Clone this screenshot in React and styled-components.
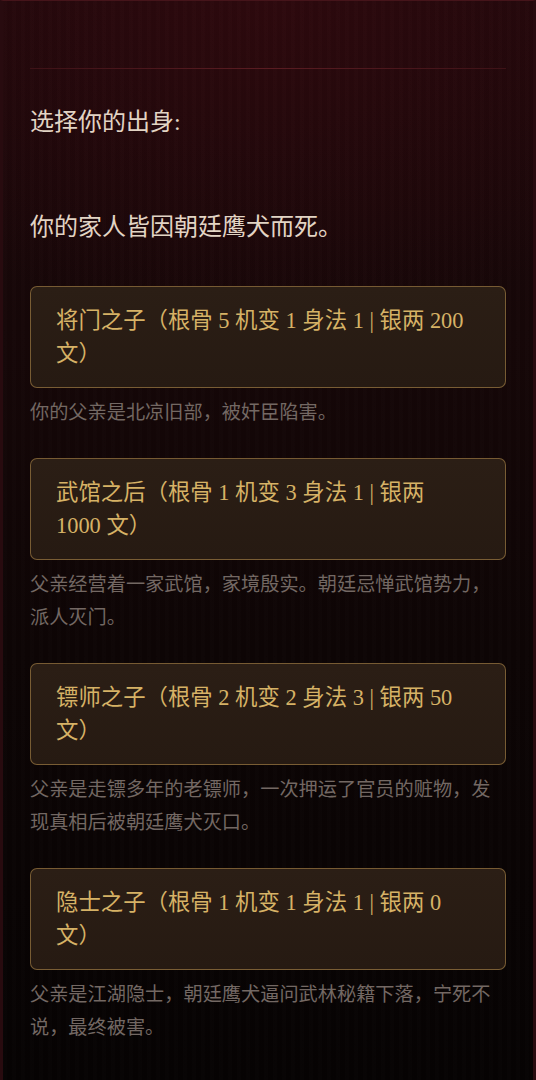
import React from "react";
import styled, { createGlobalStyle } from "styled-components";

const GlobalStyle = createGlobalStyle`
  html, body {
    margin: 0;
    padding: 0;
    background: #7c7c7c;
  }
  * {
    box-sizing: border-box;
  }
`;

const Page = styled.div`
  width: 536px;
  min-height: 1078px;
  padding: 0 27px 40px;
  border-left: 3px solid #280b0f;
  border-right: 3px solid #280b0f;
  border-top: 1px solid #45141a;
  font-family: "Liberation Serif", "Noto Sans CJK SC", serif;
  background:
    repeating-linear-gradient(
      90deg,
      rgba(255, 255, 255, 0.006) 0 4px,
      rgba(0, 0, 0, 0.025) 4px 9px
    ),
    radial-gradient(ellipse 90% 30% at 50% 0%, rgba(60, 10, 16, 0.5), transparent 100%),
    linear-gradient(180deg, #1f080b 0%, #160708 30%, #0d0505 60%, #060303 100%);
`;

const Divider = styled.hr`
  margin: 67px 0 0;
  height: 1px;
  border: 0;
  background: linear-gradient(90deg, #3e1217, #5a1c22 50%, #3e1217);
`;

const Lead = styled.p`
  margin: ${(p) => p.$top}px 0 0;
  font-size: 24px;
  line-height: 36px;
  color: #e2d4c4;
`;

const OriginList = styled.div`
  display: flex;
  flex-direction: column;
  margin-top: 41px;
`;

const OriginItem = styled.div`
  display: flex;
  flex-direction: column;
  & + & {
    margin-top: 28px;
  }
`;

const OriginButton = styled.button`
  display: block;
  width: 100%;
  text-align: left;
  padding: 17px 38px 17px 25px;
  border: 1px solid rgba(186, 146, 78, 0.55);
  border-radius: 7px;
  background: linear-gradient(180deg, #2b1e15, #261a12);
  font-family: inherit;
  font-size: 22.4px;
  line-height: 33px;
  color: #d6b266;
  cursor: pointer;
`;

const OriginDesc = styled.p`
  margin: 8px 0 0;
  font-size: 19.2px;
  line-height: 33.5px;
  color: #736863;
`;

const origins = [
  {
    title: "将门之子（根骨 5 机变 1 身法 1 | 银两 200 文）",
    desc: "你的父亲是北凉旧部，被奸臣陷害。",
  },
  {
    title: "武馆之后（根骨 1 机变 3 身法 1 | 银两 1000 文）",
    desc: "父亲经营着一家武馆，家境殷实。朝廷忌惮武馆势力，派人灭门。",
  },
  {
    title: "镖师之子（根骨 2 机变 2 身法 3 | 银两 50 文）",
    desc: "父亲是走镖多年的老镖师，一次押运了官员的赃物，发现真相后被朝廷鹰犬灭口。",
  },
  {
    title: "隐士之子（根骨 1 机变 1 身法 1 | 银两 0 文）",
    desc: "父亲是江湖隐士，朝廷鹰犬逼问武林秘籍下落，宁死不说，最终被害。",
  },
];

const App = () => {
  return (
    <>
      <GlobalStyle />
      <Page>
        <Divider />
        <Lead $top={35}>选择你的出身:</Lead>
        <Lead $top={69}>你的家人皆因朝廷鹰犬而死。</Lead>
        <OriginList>
          {origins.map((o) => (
            <OriginItem key={o.title}>
              <OriginButton>{o.title}</OriginButton>
              <OriginDesc>{o.desc}</OriginDesc>
            </OriginItem>
          ))}
        </OriginList>
      </Page>
    </>
  );
};

export default App;
